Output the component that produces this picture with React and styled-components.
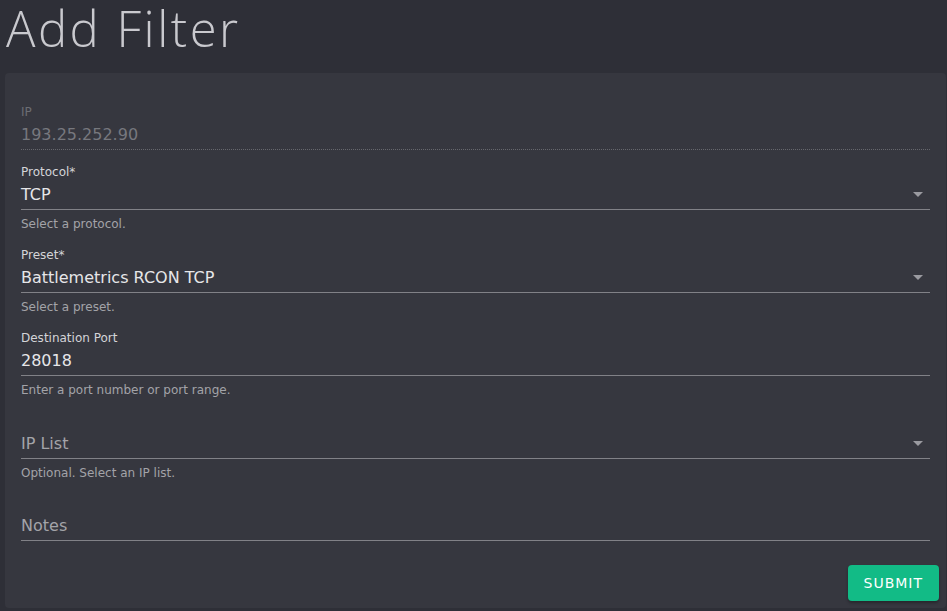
import React from 'react';
import styled, { createGlobalStyle } from 'styled-components';

const GlobalStyle = createGlobalStyle`
  html, body {
    margin: 0;
    padding: 0;
    background: #2e2f37;
  }
  body {
    font-family: "DejaVu Sans", "Liberation Sans", sans-serif;
  }
`;

const Page = styled.div`
  min-height: 611px;
  background: #2e2f37;
  display: flex;
  flex-direction: column;
  padding: 0 1px 0 5px;
  box-sizing: border-box;
`;

const Title = styled.h1`
  margin: 0;
  height: 73px;
  padding: 0 0 0 1px;
  font-family: "Open Sans", sans-serif;
  font-weight: 300;
  font-size: 49px;
  line-height: 56px;
  letter-spacing: 2.5px;
  color: #c9c9ce;
  box-sizing: border-box;
`;

const Card = styled.div`
  background: #36373f;
  border-radius: 4px;
  display: flex;
  flex-direction: column;
  padding-top: 31px;
`;

const Form = styled.div`
  display: flex;
  flex-direction: column;
  padding: 0 16px;
`;

const Field = styled.div`
  display: flex;
  flex-direction: column;
  margin-bottom: ${(p) => p.$gap}px;
`;

const Label = styled.div`
  height: 16px;
  font-size: 12px;
  line-height: 16px;
  color: ${(p) => (p.$disabled ? '#6c6d73' : '#d4d4d8')};
`;

const InputRow = styled.div`
  height: 29px;
  display: flex;
  align-items: center;
  border-bottom: 1px ${(p) => (p.$disabled ? 'dotted' : 'solid')} ${(p) => (p.$disabled ? '#66676d' : '#818187')};
`;

const Value = styled.div`
  flex: 1;
  font-size: 16px;
  line-height: 20px;
  color: ${(p) => (p.$disabled ? '#77787e' : p.$placeholder ? '#a4a4a9' : '#e6e6e9')};
`;

const Arrow = styled.div`
  width: 24px;
  display: flex;
  justify-content: center;
  align-items: center;
  &::after {
    content: '';
    border-left: 5px solid transparent;
    border-right: 5px solid transparent;
    border-top: 5px solid #9a9aa0;
  }
`;

const Helper = styled.div`
  margin-top: 6px;
  height: 16px;
  font-size: 12px;
  line-height: 16px;
  color: #a3a3a8;
`;

const Actions = styled.div`
  display: flex;
  justify-content: flex-end;
  padding: 24px 7px 7px 8px;
`;

const Button = styled.button`
  height: 36px;
  padding: 0 16px;
  border: none;
  border-radius: 4px;
  background: #12bb86;
  color: #ffffff;
  font-family: "DejaVu Sans", sans-serif;
  font-size: 14px;
  letter-spacing: 1px;
  box-shadow: 0 2px 3px rgba(0, 0, 0, 0.3);
  cursor: pointer;
`;

const fields = [
  { label: 'IP', value: '193.25.252.90', disabled: true, gap: 14 },
  { label: 'Protocol*', value: 'TCP', select: true, helper: 'Select a protocol.', gap: 15 },
  { label: 'Preset*', value: 'Battlemetrics RCON TCP', select: true, helper: 'Select a preset.', gap: 15 },
  { label: 'Destination Port', value: '28018', helper: 'Enter a port number or port range.', gap: 15 },
  { label: '', value: 'IP List', placeholder: true, select: true, helper: 'Optional. Select an IP list.', gap: 14 },
  { label: '', value: 'Notes', placeholder: true, gap: 0 },
];

const App = () => {
  return (
    <Page>
      <GlobalStyle />
      <Title>Add Filter</Title>
      <Card>
        <Form>
          {fields.map((f, i) => (
            <Field key={i} $gap={f.gap}>
              <Label $disabled={f.disabled}>{f.label}</Label>
              <InputRow $disabled={f.disabled}>
                <Value $disabled={f.disabled} $placeholder={f.placeholder}>{f.value}</Value>
                {f.select && <Arrow />}
              </InputRow>
              {f.helper && <Helper>{f.helper}</Helper>}
            </Field>
          ))}
        </Form>
        <Actions>
          <Button>SUBMIT</Button>
        </Actions>
      </Card>
    </Page>
  );
};

export default App;
